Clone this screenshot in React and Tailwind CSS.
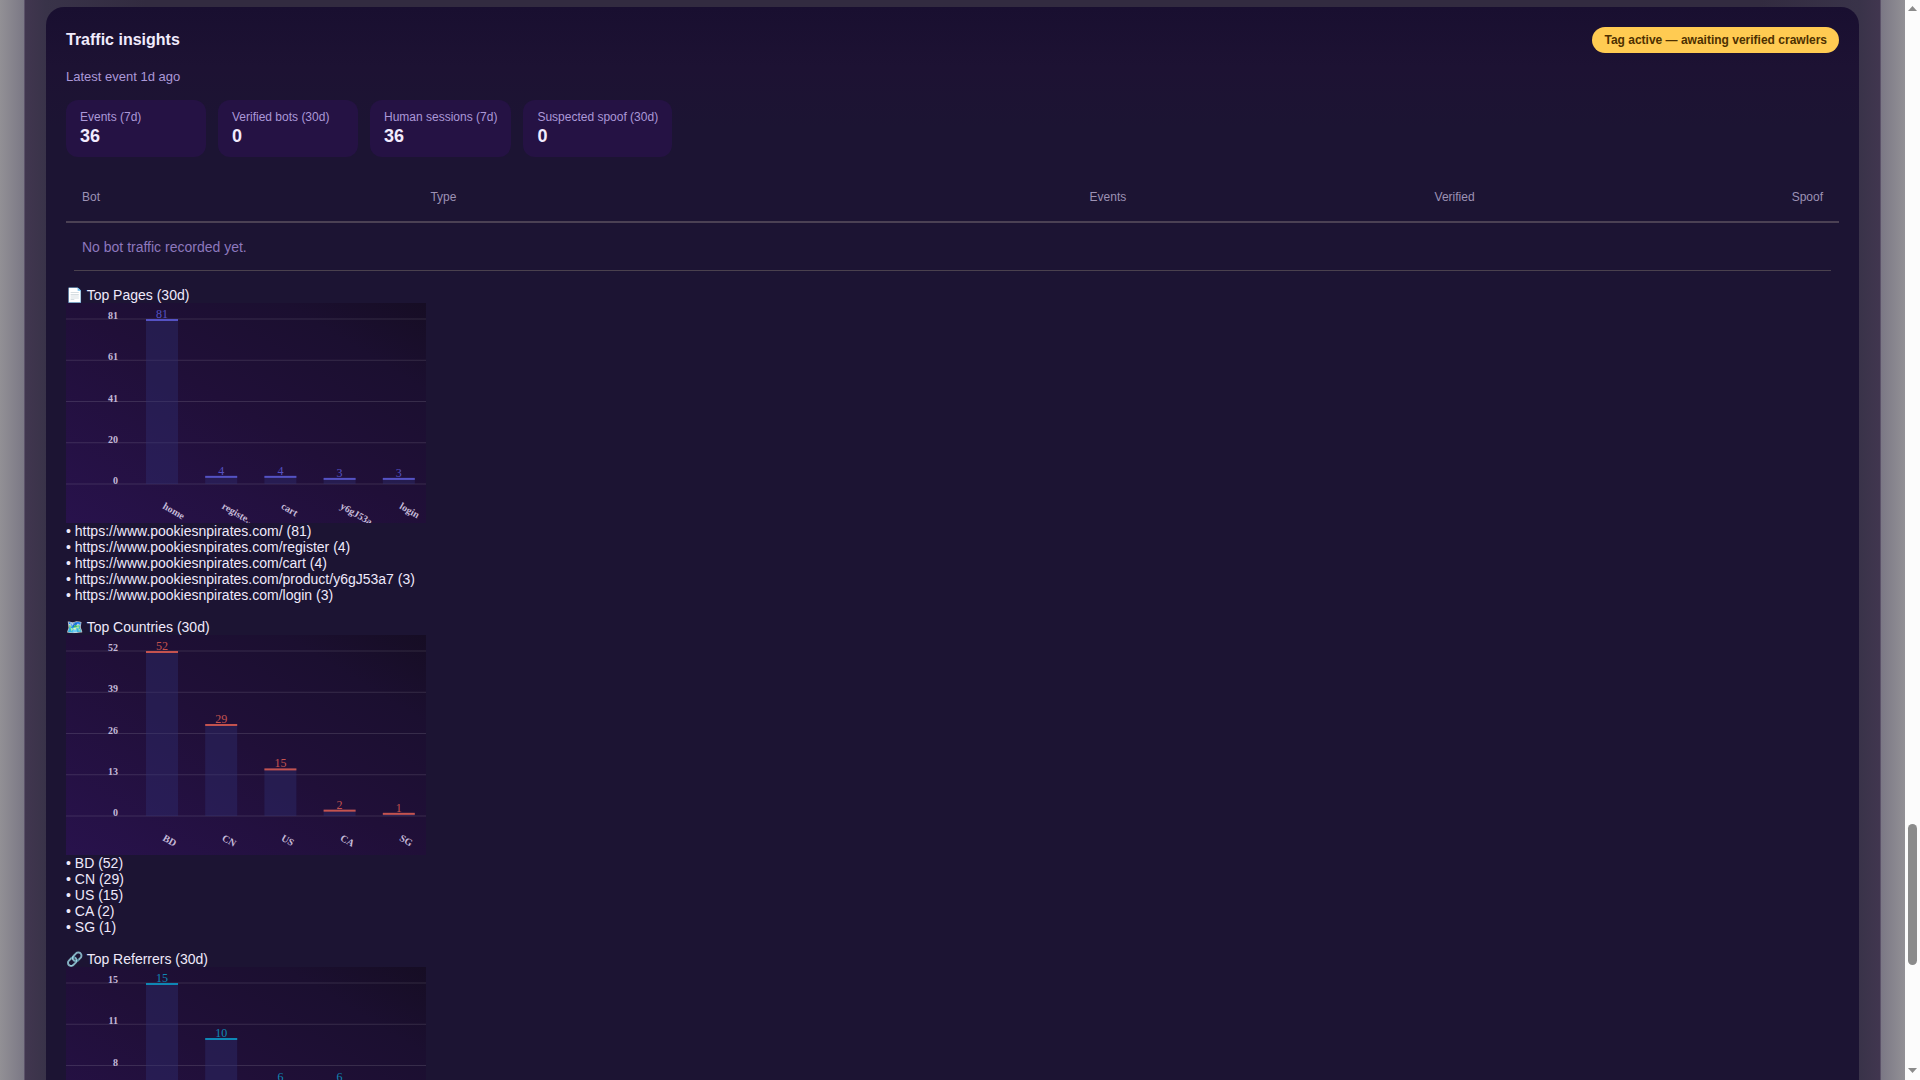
const STATS = [
  { label: "Events (7d)", value: 36 },
  { label: "Verified bots (30d)", value: 0 },
  { label: "Human sessions (7d)", value: 36 },
  { label: "Suspected spoof (30d)", value: 0 },
];

const SECTIONS = [
  {
    id: "pages",
    icon: "📄",
    title: "Top Pages (30d)",
    color: "#5552c4",
    ticks: [81, 61, 41, 20, 0],
    items: [
      { name: "https://www.pookiesnpirates.com/", short: "home", count: 81 },
      { name: "https://www.pookiesnpirates.com/register", short: "registe..", count: 4 },
      { name: "https://www.pookiesnpirates.com/cart", short: "cart", count: 4 },
      { name: "https://www.pookiesnpirates.com/product/y6gJ53a7", short: "y6gJ53a..", count: 3 },
      { name: "https://www.pookiesnpirates.com/login", short: "login", count: 3 },
    ],
  },
  {
    id: "countries",
    icon: "🗺️",
    title: "Top Countries (30d)",
    color: "#c4534f",
    ticks: [52, 39, 26, 13, 0],
    items: [
      { name: "BD", short: "BD", count: 52 },
      { name: "CN", short: "CN", count: 29 },
      { name: "US", short: "US", count: 15 },
      { name: "CA", short: "CA", count: 2 },
      { name: "SG", short: "SG", count: 1 },
    ],
  },
  {
    id: "referrers",
    icon: "🔗",
    title: "Top Referrers (30d)",
    color: "#0f87b5",
    ticks: [15, 11, 8, 4, 0],
    items: [{ count: 15 }, { count: 10 }, { count: 6 }, { count: 6 }],
  },
];

const PLOT_TOP = 16;
const PLOT_HEIGHT = 165;
const BASELINE = PLOT_TOP + PLOT_HEIGHT;
const BAR_WIDTH = 32;
const BAR_STEP = 59.2;

function BarChart({ title, ticks, items, color }) {
  const max = ticks[0];
  return (
    <svg width="360" height="220" viewBox="0 0 360 220" role="img" aria-label={title}
      className="block overflow-hidden bg-[linear-gradient(to_top_right,#28124c,#200f38_50%,#1b0f30_80%,#160d24)] font-['Liberation_Serif',serif]">
      {ticks.map((tick, i) => {
        const y = PLOT_TOP + (PLOT_HEIGHT / 4) * i;
        return (
          <g key={tick}>
            <line x1="0" x2="360" y1={y} y2={y} stroke="#ffffff" strokeOpacity="0.12" />
            <text x="52" y={y} textAnchor="end" fontSize="10" fontWeight="bold" fill="#c4bad8">{tick}</text>
          </g>
        );
      })}
      {items.map((item, i) => {
        const x = 80 + BAR_STEP * i;
        const y = BASELINE - (item.count / max) * PLOT_HEIGHT;
        const center = x + BAR_WIDTH / 2;
        return (
          <g key={i}>
            <rect x={x} y={y} width={BAR_WIDTH} height={BASELINE - y} fill="#302f74" fillOpacity="0.4" />
            <rect x={x} y={y} width={BAR_WIDTH} height="2" fill={color} />
            <text x={center} y={y - 1} textAnchor="middle" fontSize="12" fill={color}>{item.count}</text>
            {item.short && (
              <text x={center} y="205" transform={`rotate(30 ${center} 205)`} fontSize="10" fontWeight="bold" fill="#c4bad8">
                {item.short}
              </text>
            )}
          </g>
        );
      })}
    </svg>
  );
}

function TopSection({ icon, title, color, ticks, items }) {
  return (
    <section className="text-sm leading-4 text-[#efe9fb]">
      <h3 className="h-4 whitespace-nowrap">{icon} {title}</h3>
      <BarChart title={title} ticks={ticks} items={items} color={color} />
      <ul>
        {items.filter(item => item.name).map(item => (
          <li key={item.name}>• {item.name} ({item.count})</li>
        ))}
      </ul>
    </section>
  );
}

function BotTable() {
  return (
    <table className="w-full table-fixed border-separate border-spacing-0 text-left">
      <thead>
        <tr className="text-xs leading-4 text-[#9d92b5]">
          <th className="w-[19.65%] border-b-2 border-[#4b4154] p-4 font-normal">Bot</th>
          <th className="border-b-2 border-[#4b4154] p-4 font-normal">Type</th>
          <th className="w-[19.65%] border-b-2 border-[#4b4154] p-4 text-right font-normal">Events</th>
          <th className="w-[19.65%] border-b-2 border-[#4b4154] p-4 text-right font-normal">Verified</th>
          <th className="w-[19.65%] border-b-2 border-[#4b4154] p-4 text-right font-normal">Spoof</th>
        </tr>
      </thead>
      <tbody>
        <tr>
          <td colSpan={5} className="px-2 py-0 text-sm leading-4 text-[#8d78bd]">
            <div className="border-b border-[#4a414e] px-2 pt-4 pb-[15px]">No bot traffic recorded yet.</div>
          </td>
        </tr>
      </tbody>
    </table>
  );
}

function Scrollbar() {
  return (
    <div aria-hidden="true" className="flex w-[15px] shrink-0 flex-col items-center bg-[#fcfcfc]">
      <svg width="15" height="15" viewBox="0 0 15 15" fill="#8b8b8b"><path d="M7.5 6 L12 11 H3 Z" /></svg>
      <div className="flex-[809]" />
      <div className="w-[9px] flex-[141] rounded-full bg-[#8b8b8b]" />
      <div className="flex-[100]" />
      <svg width="15" height="15" viewBox="0 0 15 15" fill="#8b8b8b"><path d="M7.5 8 L12 3 H3 Z" /></svg>
    </div>
  );
}

export default function App() {
  return (
    <div className="flex h-screen overflow-hidden font-['Liberation_Sans',Arial,sans-serif]">
      <main className="min-w-0 flex-1 bg-[linear-gradient(to_right,#929095,#7b7885_24px,#7b7885_calc(100%-24px),#929095)] px-6">
        <div className="border-x border-[#5b5269] bg-[linear-gradient(to_right,#41364f,#393349_21px,#322b40_120px,#322b40_calc(100%-120px),#393349_calc(100%-21px),#41364f)] px-[21px] pt-[7px]">
          <div className="flex flex-col gap-4 rounded-[18px] bg-[linear-gradient(to_bottom,#190f30,#1d1233_60px,#1c1433_120px)] p-5">
            <div className="flex items-center justify-between">
              <h2 className="text-base font-bold text-[#f1ebfd]">Traffic insights</h2>
              <span className="rounded-full bg-[#ffcb52] px-3 py-[5px] text-xs leading-4 font-bold text-[#4d3000]">
                Tag active — awaiting verified crawlers
              </span>
            </div>
            <p className="text-[13px] leading-[15px] text-[#ab98d8]">Latest event 1d ago</p>
            <div className="flex flex-wrap gap-3">
              {STATS.map(stat => (
                <div key={stat.label} className="min-w-[140px] rounded-xl bg-[#251244] px-3.5 py-2.5">
                  <div className="text-xs leading-[14px] text-[#ab98d8]">{stat.label}</div>
                  <div className="mt-0.5 text-lg leading-[21px] font-bold text-[#f1ebfd]">{stat.value}</div>
                </div>
              ))}
            </div>
            <BotTable />
            {SECTIONS.map(({ id, ...section }) => <TopSection key={id} {...section} />)}
          </div>
        </div>
      </main>
      <Scrollbar />
    </div>
  );
}
